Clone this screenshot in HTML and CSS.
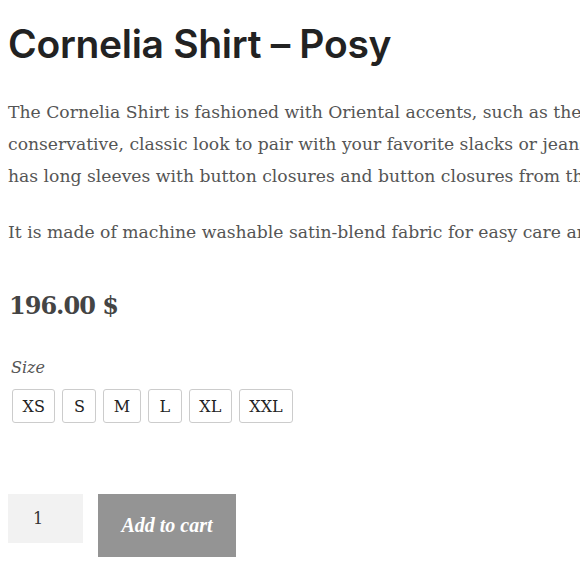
FILE: index.html
```html
<!DOCTYPE html>
<html lang="en">
<head>
<meta charset="utf-8">
<title>Cornelia Shirt – Posy</title>
<link rel="stylesheet" href="styles.css">
</head>
<body>
<main class="product">
  <h1 class="product-title">Cornelia Shirt – Posy</h1>
  <div class="description">
    <p>The Cornelia Shirt is fashioned with Oriental accents, such as the mandarin collar and frog closures. It has a<br>conservative, classic look to pair with your favorite slacks or jeans. The shirt is slightly fitted at the waist and<br>has long sleeves with button closures and button closures from the collar to the hem.</p>
    <p>It is made of machine washable satin-blend fabric for easy care and comfortable wear.</p>
  </div>
  <p class="price">196.00 $</p>
  <form class="cart">
    <div class="variation">
      <div class="variation-label">Size</div>
      <div class="swatches">
        <span class="swatch">XS</span>
        <span class="swatch">S</span>
        <span class="swatch">M</span>
        <span class="swatch">L</span>
        <span class="swatch">XL</span>
        <span class="swatch">XXL</span>
      </div>
    </div>
    <div class="add-row">
      <div class="qty">1</div>
      <button type="button" class="add-to-cart">Add to cart</button>
    </div>
  </form>
</main>
</body>
</html>
```
FILE: styles.css
```css
html, body {
  margin: 0;
  padding: 0;
  background: #ffffff;
  overflow: hidden;
}
.product {
  width: 900px;
  padding: 18px 0 0 8px;
  font-family: "DejaVu Serif", serif;
  color: #555555;
}
.product-title {
  margin: 0;
  font-family: Inter, "Noto Sans", sans-serif;
  font-weight: 600;
  font-size: 39px;
  line-height: 52px;
  color: #222222;
  letter-spacing: -0.3px;
}
.description {
  margin-top: 26px;
}
.description p {
  margin: 0 0 24px;
  font-size: 17.2px;
  line-height: 32px;
  white-space: nowrap;
}
.description p:last-child {
  margin-bottom: 0;
}
.price {
  margin: 42px 0 0 1px;
  font-size: 24px;
  font-weight: 700;
  letter-spacing: -1px;
  color: #444444;
  line-height: 32px;
}
.cart {
  margin-top: 34px;
}
.variation-label {
  margin-left: 3px;
  font-style: italic;
  font-size: 16px;
  line-height: 24px;
  color: #555555;
}
.swatches {
  display: flex;
  gap: 7px;
  margin: 9px 0 0 4px;
}
.swatch {
  display: flex;
  align-items: center;
  justify-content: center;
  box-sizing: border-box;
  min-width: 34px;
  height: 34px;
  padding: 0 9.5px;
  border: 1px solid #cccccc;
  border-radius: 3px;
  font-size: 16px;
  color: #222222;
}
.add-row {
  display: flex;
  align-items: flex-start;
  gap: 15px;
  margin-top: 71px;
}
.qty {
  width: 75px;
  height: 49px;
  box-sizing: border-box;
  padding-left: 25px;
  background: #f2f2f2;
  display: flex;
  align-items: center;
  font-size: 16px;
  color: #333333;
}
.add-to-cart {
  width: 138px;
  height: 63px;
  padding: 0;
  border: 0;
  background: #949494;
  color: #ffffff;
  font-family: "Liberation Serif", serif;
  font-style: italic;
  font-weight: 700;
  font-size: 20px;
  cursor: pointer;
}
```
